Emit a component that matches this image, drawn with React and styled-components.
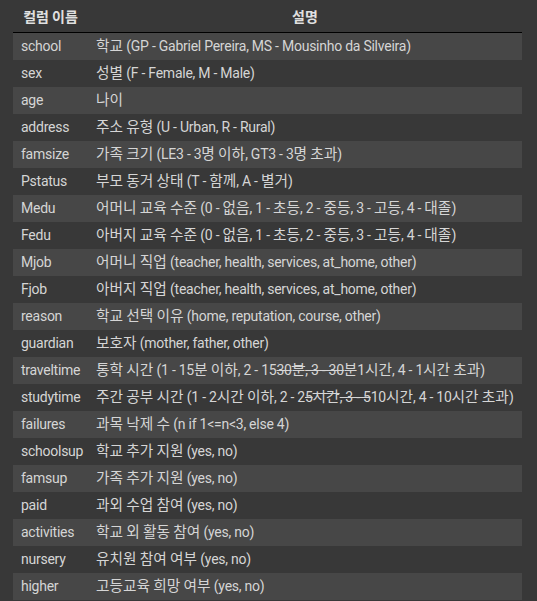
import React from "react";
import styled, { createGlobalStyle } from "styled-components";

const Global = createGlobalStyle`
  html, body { margin: 0; padding: 0; background: #383838; }
  body { font-family: Roboto, "Noto Sans CJK KR", sans-serif; color: #d5d5d5; }
`;

const Page = styled.div`
  padding: 0 15px 0 13px;
  background: #383838;
  height: 601px;
  overflow: hidden;
`;

const Table = styled.table`
  width: 509px;
  border-collapse: collapse;
  table-layout: fixed;
  font-size: 14px;
  letter-spacing: -0.25px;
`;

const HeadCell = styled.th`
  height: 32px;
  padding: 0 6px;
  text-align: center;
  font-weight: bold;
  font-family: "Noto Sans CJK KR", Roboto, sans-serif;
  font-size: 14px;
  letter-spacing: 0;
  line-height: 1;
  color: #e0e0e0;
  border-bottom: 1px solid #000;
  white-space: nowrap;
`;

const Row = styled.tr`
  background: ${(p) => (p.$odd ? "#383838" : "#474747")};
`;

const Cell = styled.td`
  height: 27px;
  padding: 0 8px;
  line-height: 27px;
  white-space: nowrap;
  text-align: left;
  box-sizing: border-box;
`;

const Hangul = styled.span`
  font-family: "Noto Sans CJK KR", sans-serif;
  font-size: 14.7px;
  letter-spacing: 0;
  line-height: 1;
`;

const Strike = styled.s`
  text-decoration: line-through;
`;

const HANGUL = /([\u3131-\u318E\uAC00-\uD7A3]+)/;

function ko(text) {
  return text.split(HANGUL).map((part, i) =>
    /[\u3131-\u318E\uAC00-\uD7A3]/.test(part) ? <Hangul key={i}>{part}</Hangul> : part
  );
}

const rows = [
  ["school", ko("학교 (GP - Gabriel Pereira, MS - Mousinho da Silveira)")],
  ["sex", ko("성별 (F - Female, M - Male)")],
  ["age", ko("나이")],
  ["address", ko("주소 유형 (U - Urban, R - Rural)")],
  ["famsize", ko("가족 크기 (LE3 - 3명 이하, GT3 - 3명 초과)")],
  ["Pstatus", ko("부모 동거 상태 (T - 함께, A - 별거)")],
  ["Medu", ko("어머니 교육 수준 (0 - 없음, 1 - 초등, 2 - 중등, 3 - 고등, 4 - 대졸)")],
  ["Fedu", ko("아버지 교육 수준 (0 - 없음, 1 - 초등, 2 - 중등, 3 - 고등, 4 - 대졸)")],
  ["Mjob", ko("어머니 직업 (teacher, health, services, at_home, other)")],
  ["Fjob", ko("아버지 직업 (teacher, health, services, at_home, other)")],
  ["reason", ko("학교 선택 이유 (home, reputation, course, other)")],
  ["guardian", ko("보호자 (mother, father, other)")],
  [
    "traveltime",
    <>
      {ko("통학 시간 (1 - 15분 이하, 2 - 15")}
      <Strike>{ko("30분, 3 - 30")}</Strike>
      {ko("분1시간, 4 - 1시간 초과)")}
    </>,
  ],
  [
    "studytime",
    <>
      {ko("주간 공부 시간 (1 - 2시간 이하, 2 - 2")}
      <Strike>{ko("5시간, 3 - 5")}</Strike>
      {ko("10시간, 4 - 10시간 초과)")}
    </>,
  ],
  ["failures", ko("과목 낙제 수 (n if 1<=n<3, else 4)")],
  ["schoolsup", ko("학교 추가 지원 (yes, no)")],
  ["famsup", ko("가족 추가 지원 (yes, no)")],
  ["paid", ko("과외 수업 참여 (yes, no)")],
  ["activities", ko("학교 외 활동 참여 (yes, no)")],
  ["nursery", ko("유치원 참여 여부 (yes, no)")],
  ["higher", ko("고등교육 희망 여부 (yes, no)")],
];

export default function App() {
  return (
    <Page>
      <Global />
      <Table>
        <colgroup>
          <col style={{ width: 75 }} />
          <col />
        </colgroup>
        <thead>
          <tr>
            <HeadCell>컬럼 이름</HeadCell>
            <HeadCell>설명</HeadCell>
          </tr>
        </thead>
        <tbody>
          {rows.map(([name, desc], i) => (
            <Row key={name} $odd={i % 2 === 1}>
              <Cell>{name}</Cell>
              <Cell>{desc}</Cell>
            </Row>
          ))}
        </tbody>
      </Table>
    </Page>
  );
}
